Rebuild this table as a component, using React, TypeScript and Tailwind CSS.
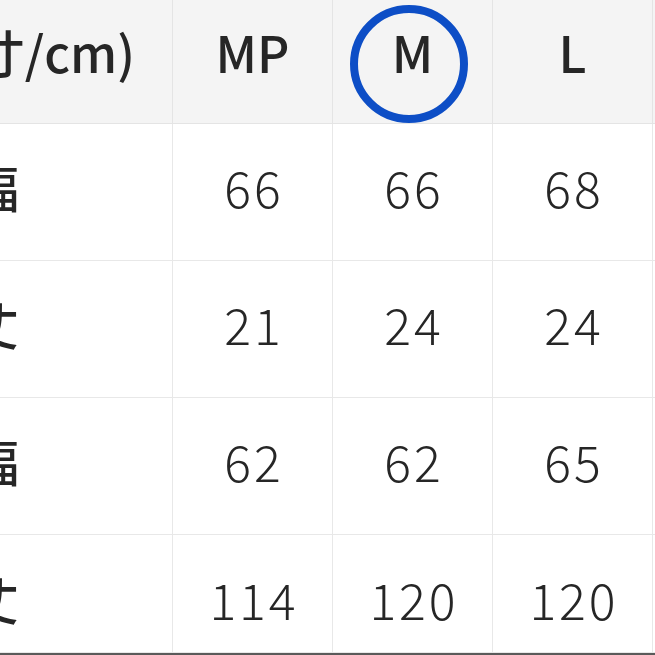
const sizes = ['MP', 'M', 'L'];

const rows = [
  { label: '身幅', values: ['66', '66', '68'] },
  { label: '袖丈', values: ['21', '24', '24'] },
  { label: '裾幅', values: ['62', '62', '65'] },
  { label: '着丈', values: ['114', '120', '120'] },
];

const font = { fontFamily: '"Noto Sans CJK JP", "Noto Sans", sans-serif' };

export default function App() {
  return (
    <div className="w-[655px] h-[655px] overflow-hidden bg-white text-[#262626]" style={font}>
      <div className="grid grid-cols-[173px_160px_160px_160px_1fr]">
        {/* header */}
        <div className="h-[124px] flex items-center justify-end pr-[37px] pb-[22px] bg-[#f4f4f4] border-r border-b border-[#e4e4e4] text-[50px] leading-none font-medium whitespace-nowrap overflow-hidden">
          (実寸/cm)
        </div>
        {sizes.map((s) => (
          <div
            key={s}
            className="relative h-[124px] flex items-center justify-center pb-[22px] bg-[#f4f4f4] border-r border-b border-[#e4e4e4] text-[50px] leading-none font-medium"
          >
            {s}
            {s === 'M' && (
              <div className="absolute top-[5px] left-[17px] w-[118px] h-[118px] rounded-full border-[8px] border-[#0d4ec6]" />
            )}
          </div>
        ))}
        <div className="h-[124px] bg-[#f4f4f4] border-b border-[#e4e4e4]" />

        {/* body */}
        {rows.map((r, i) => {
          const last = i === rows.length - 1;
          const h = last ? 'h-[118px] items-start pt-[38px]' : 'h-[137px] items-center pb-3';
          return (
            <div key={r.label} className="contents">
              <div
                className={`${h} flex justify-end pr-[153px] border-r border-b border-[#e8e8e8] text-[50px] leading-none font-medium whitespace-nowrap overflow-hidden`}
              >
                {r.label}
              </div>
              {r.values.map((v, j) => (
                <div
                  key={j}
                  className={`${h} flex justify-center pl-[3px] border-r border-b border-[#e8e8e8] text-[50px] leading-none font-light tracking-[3px]`}
                >
                  {v}
                </div>
              ))}
              <div className={`${h} border-b border-[#e8e8e8]`} />
            </div>
          );
        })}
      </div>
      <div className="h-[6px] bg-[#5a5a5a]" />
    </div>
  );
}
